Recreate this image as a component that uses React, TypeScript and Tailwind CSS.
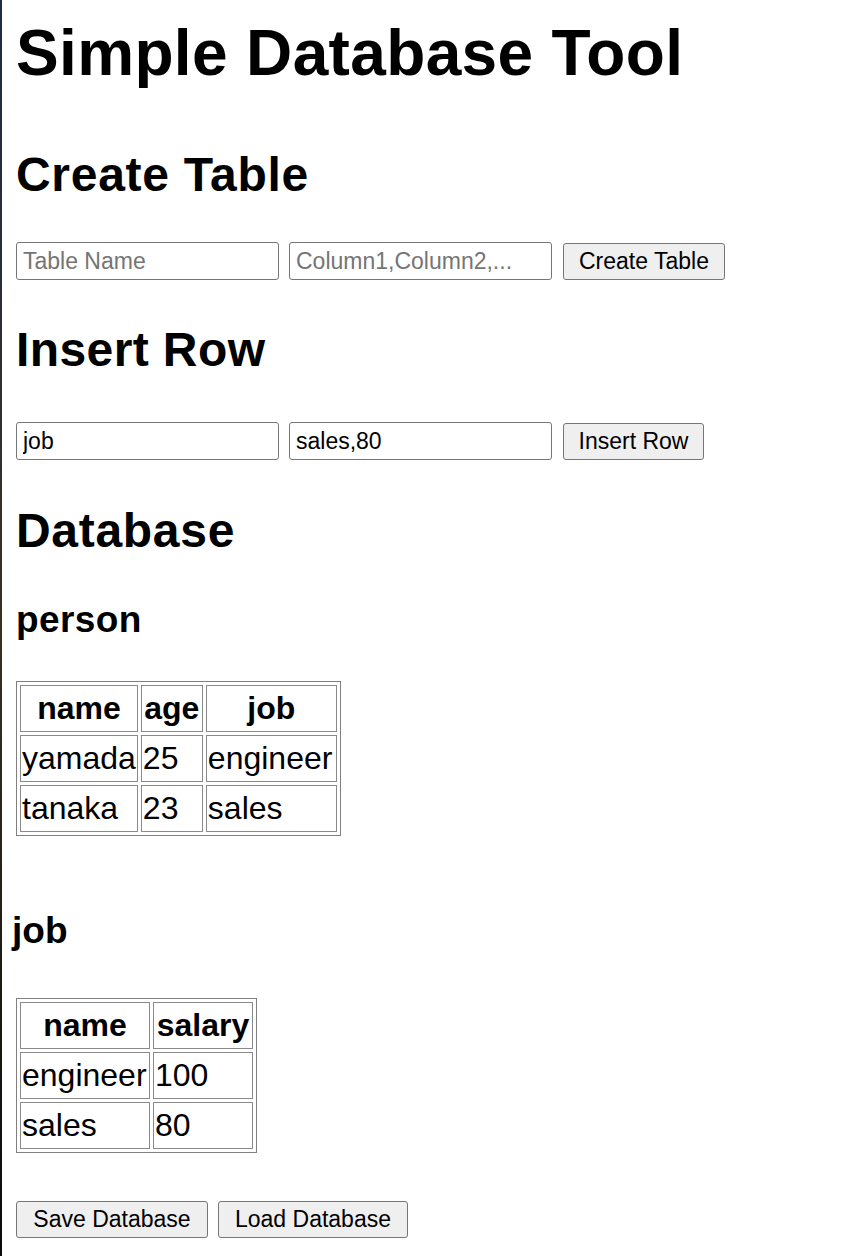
import React from "react";

const sans = { fontFamily: '"Liberation Sans", Arial, sans-serif' };

function Field({ placeholder, value }: { placeholder?: string; value?: string }) {
  return (
    <input
      className="w-[263px] h-[38px] box-border border border-[#767676] rounded-[3px] px-[6px] text-[23px] text-black placeholder:text-[#757575] bg-white outline-none"
      style={sans}
      placeholder={placeholder}
      defaultValue={value}
    />
  );
}

function Btn({ children, w }: { children: React.ReactNode; w: string }) {
  return (
    <button
      className={`${w} h-[37px] box-border border border-[#767676] rounded-[3px] bg-[#efefef] text-[23px] text-black leading-none`}
      style={sans}
    >
      {children}
    </button>
  );
}

function DataTable({ cols, rows, widths }: { cols: string[]; rows: string[][]; widths: string[] }) {
  return (
    <table className="border border-[#808080] border-separate border-spacing-[3px] text-[32px]" style={sans}>
      <thead>
        <tr>
          {cols.map((c, i) => (
            <th key={c} className={`${widths[i]} border border-[#8a8a8a] px-[1px] py-[2px] leading-[41px] font-bold text-center`}>
              {c}
            </th>
          ))}
        </tr>
      </thead>
      <tbody>
        {rows.map((r, ri) => (
          <tr key={ri}>
            {r.map((v, ci) => (
              <td key={ci} className="border border-[#8a8a8a] px-[1px] py-[2px] leading-[41px] text-left">
                {v}
              </td>
            ))}
          </tr>
        ))}
      </tbody>
    </table>
  );
}

export default function App() {
  return (
    <div className="flex min-h-[1256px] bg-white text-black" style={sans}>
      <div className="w-[2px] shrink-0 bg-gradient-to-b from-[#1d2b48] via-[#3a3020] to-[#0a0a0a]" />
      <div className="flex flex-col items-start pl-[14px]">
        <h1 className="mt-[17px] text-[64px] leading-[72px] font-bold tracking-[0.35px]">Simple Database Tool</h1>

        <h2 className="mt-[58px] text-[48px] leading-[56px] font-bold tracking-[0.7px]">Create Table</h2>
        <div className="mt-[39px] flex items-center">
          <Field placeholder="Table Name" />
          <div className="ml-[10px]">
            <Field placeholder="Column1,Column2,..." />
          </div>
          <div className="ml-[11px]">
            <Btn w="w-[162px]">Create Table</Btn>
          </div>
        </div>

        <h2 className="mt-[42px] text-[48px] leading-[56px] font-bold tracking-[0.4px]">Insert Row</h2>
        <div className="mt-[44px] flex items-center">
          <Field value="job" />
          <div className="ml-[10px]">
            <Field value="sales,80" />
          </div>
          <div className="ml-[11px]">
            <Btn w="w-[141px]">Insert Row</Btn>
          </div>
        </div>

        <h2 className="mt-[43px] text-[48px] leading-[56px] font-bold tracking-[0.7px]">Database</h2>

        <h3 className="mt-[39px] text-[37px] leading-[44px] font-bold tracking-[0.4px]">person</h3>
        <div className="mt-[39px]">
          <DataTable
            cols={["name", "age", "job"]}
            rows={[
              ["yamada", "25", "engineer"],
              ["tanaka", "23", "sales"],
            ]}
            widths={["w-[117px]", "w-[62px]", "w-[131px]"]}
          />
        </div>

        <h3 className="mt-[73px] -ml-[4px] text-[37px] leading-[44px] font-bold">job</h3>
        <div className="mt-[45px]">
          <DataTable
            cols={["name", "salary"]}
            rows={[
              ["engineer", "100"],
              ["sales", "80"],
            ]}
            widths={["w-[130px]", "w-[100px]"]}
          />
        </div>

        <div className="mt-[48px] flex items-center">
          <Btn w="w-[192px]">Save Database</Btn>
          <div className="ml-[10px]">
            <Btn w="w-[190px]">Load Database</Btn>
          </div>
        </div>
      </div>
    </div>
  );
}
